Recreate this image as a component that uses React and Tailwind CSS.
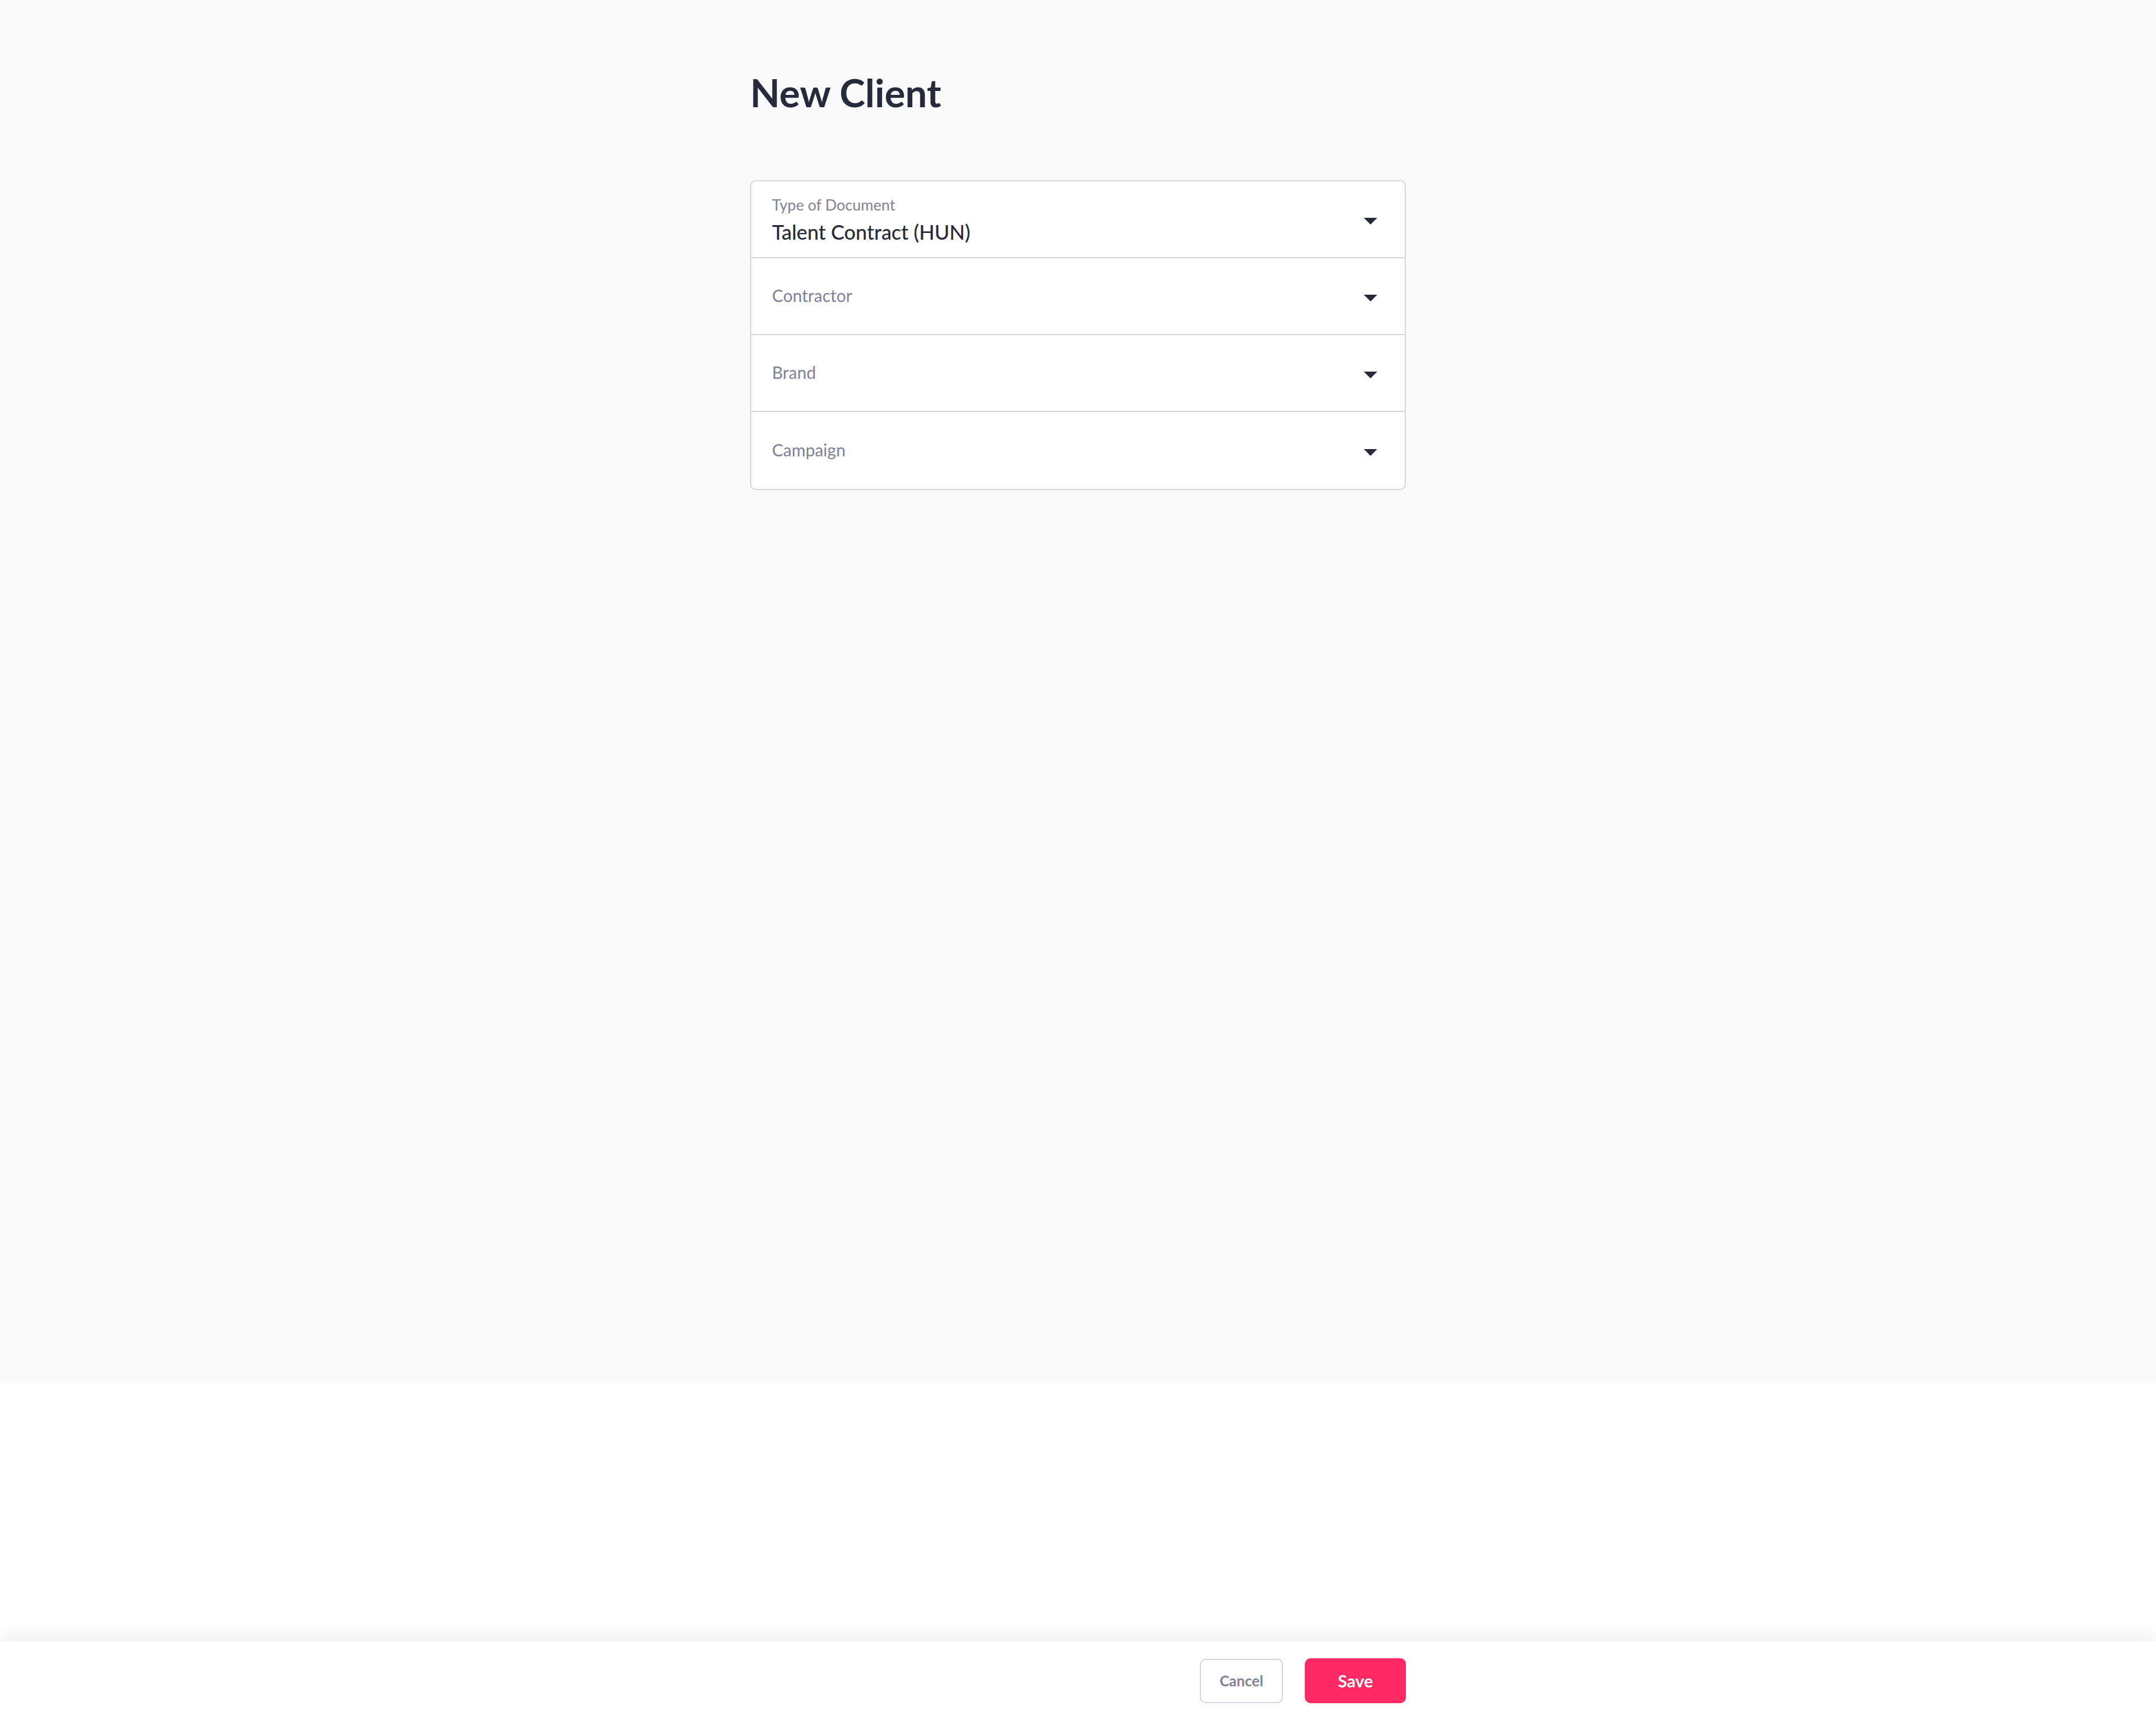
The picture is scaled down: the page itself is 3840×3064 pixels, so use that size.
import React from "react";

const fields = [
  { label: "Type of Document", value: "Talent Contract (HUN)" },
  { label: "Contractor" },
  { label: "Brand" },
  { label: "Campaign" },
];

function Caret() {
  return (
    <svg width="24" height="12" viewBox="0 0 24 12" className="mt-[6px] shrink-0">
      <polygon points="0,0 24,0 12,12" fill="#262a3b" />
    </svg>
  );
}

function SelectRow({ label, value, last }) {
  return (
    <div
      className={
        "flex h-[137px] items-center justify-between pl-[37px] pr-[49px] " +
        (last ? "" : "border-b-2 border-[#d3d5e1]")
      }
    >
      {value ? (
        <div className="flex flex-col">
          <span className="text-[27px] leading-none text-[#7f8296]">{label}</span>
          <span className="mt-[17px] text-[36px] leading-none font-medium text-[#262a3b]">
            {value}
          </span>
        </div>
      ) : (
        <span className="pb-[4px] text-[30px] leading-none text-[#7f8296]">{label}</span>
      )}
      <Caret />
    </div>
  );
}

export default function App() {
  return (
    <div
      className="flex h-screen flex-col bg-white"
      style={{ fontFamily: "Lato, 'Open Sans', sans-serif" }}
    >
      {/* ---------------- Form area ---------------- */}
      <main className="h-[2464px] shrink-0 bg-[#fafafa] pt-[130px]">
        <div className="mx-auto w-[1168px]">
          <h1 className="text-[69px] leading-none font-bold text-[#262a3b]">New Client</h1>

          <div className="mt-[122px] overflow-hidden rounded-[10px] border-2 border-[#d3d5e1] bg-white">
            {fields.map((f, i) => (
              <SelectRow key={f.label} {...f} last={i === fields.length - 1} />
            ))}
          </div>
        </div>
      </main>

      <div className="flex-1" />

      {/* ---------------- Footer ---------------- */}
      <footer className="h-[140px] shrink-0 bg-white shadow-[0_-10px_30px_rgba(0,0,0,0.07)]">
        <div className="mx-auto flex h-full w-[1168px] items-center justify-end gap-[39px]">
          <button className="h-[79px] w-[148px] rounded-[10px] border-2 border-[#d3d5e1] bg-white text-[26px] font-bold text-[#7f8194]">
            Cancel
          </button>
          <button className="h-[80px] w-[180px] rounded-[10px] bg-[#ff2a63] text-[30px] font-bold text-white">
            Save
          </button>
        </div>
      </footer>
    </div>
  );
}
